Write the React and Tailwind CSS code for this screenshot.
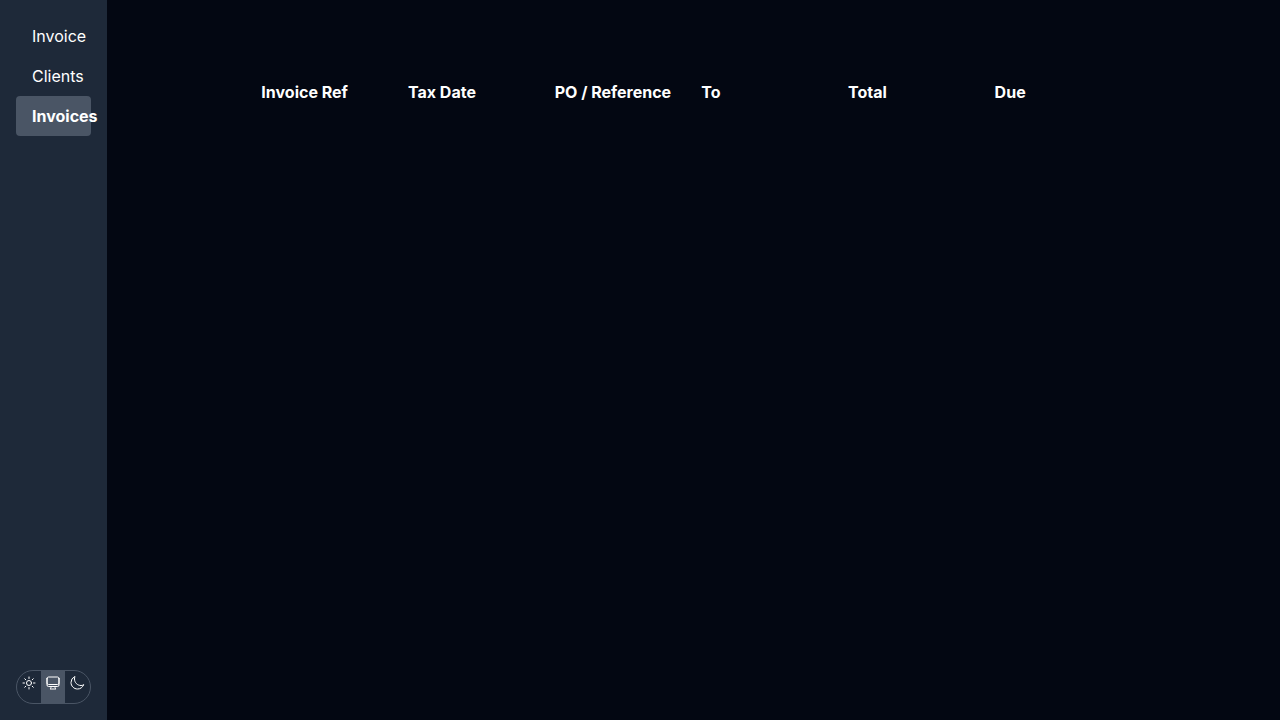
import { useState } from "react";
import { HiOutlineComputerDesktop, HiOutlineMoon, HiOutlineSun } from "react-icons/hi2";

const links = ["Invoice", "Clients", "Invoices"];
const columns = ["Invoice Ref", "Tax Date", "PO / Reference", "To", "Total", "Due"];
const themes = [
  { name: "Light", Icon: HiOutlineSun },
  { name: "System", Icon: HiOutlineComputerDesktop },
  { name: "Dark", Icon: HiOutlineMoon },
];

function Sidebar() {
  const [page, setPage] = useState("Invoices");
  const [theme, setTheme] = useState("System");

  return (
    <aside className="flex w-1/12 shrink-0 flex-col justify-between bg-gray-800 p-4">
      <nav aria-label="Main">
        {links.map((link) => (
          <a
            key={link}
            href={`#${link.toLowerCase()}`}
            onClick={() => setPage(link)}
            aria-current={page === link ? "page" : undefined}
            className={`block rounded px-4 py-2 ${page === link ? "bg-gray-600 font-bold" : ""}`}
          >
            {link}
          </a>
        ))}
      </nav>
      <div
        role="group"
        aria-label="Theme"
        className="flex overflow-hidden rounded-full border border-gray-600"
      >
        {themes.map(({ name, Icon }) => (
          <button
            key={name}
            type="button"
            aria-label={name}
            aria-pressed={theme === name}
            onClick={() => setTheme(name)}
            className={`flex h-8 items-start px-1 pt-1 ${theme === name ? "bg-gray-600" : ""}`}
          >
            <Icon className="size-4 shrink-0" aria-hidden="true" />
          </button>
        ))}
      </div>
    </aside>
  );
}

export default function App() {
  return (
    <div className="flex min-h-screen bg-gray-950 font-['Inter',sans-serif] text-base text-white">
      <Sidebar />
      <main className="min-w-0 flex-1 py-16">
        <table className="mx-auto w-3/4 table-fixed">
          <thead>
            <tr>
              {columns.map((column) => (
                <th key={column} scope="col" className="px-2 py-4 text-left font-bold whitespace-nowrap">
                  {column}
                </th>
              ))}
            </tr>
          </thead>
          <tbody />
        </table>
      </main>
    </div>
  );
}
